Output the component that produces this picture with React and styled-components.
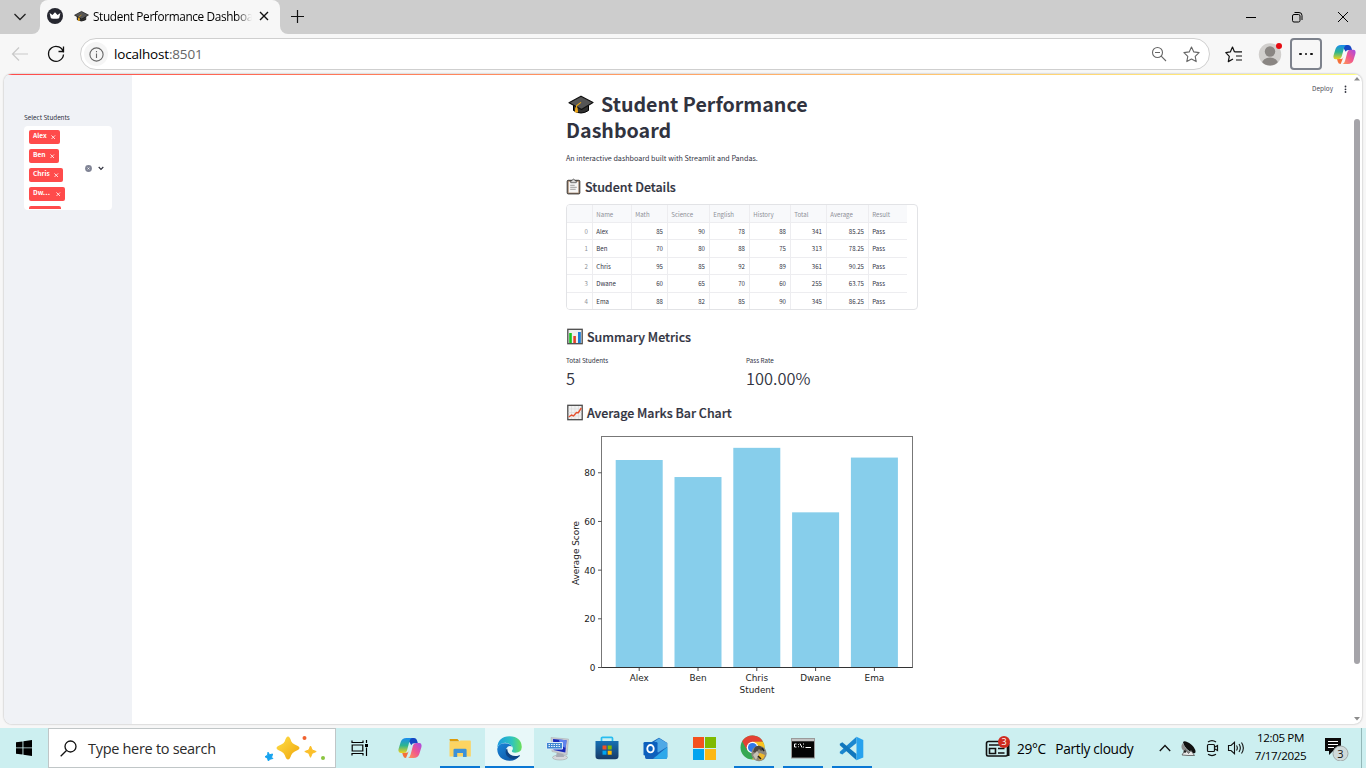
import React from "react";
import styled, { createGlobalStyle } from "styled-components";

const Global = createGlobalStyle`
  * { box-sizing: border-box; }
  html, body { margin: 0; padding: 0; overflow: hidden; }
  body { font-family: "Open Sans", "Noto Sans", sans-serif; background: #f7f7f7; color: #000; }
  svg { display: block; flex: none; }
`;

const source = `"Noto Sans CJK SC", "Noto Sans", sans-serif`;

const Screen = styled.div`
  width: 1366px; height: 768px; display: flex; flex-direction: column; overflow: hidden;
`;

/* ---------- browser chrome ---------- */
const TabStrip = styled.div`
  height: 34px; background: #cdcdcd; display: flex; align-items: center; flex: none;
`;
const TabMenu = styled.div`
  width: 40px; height: 34px; display: flex; align-items: center; justify-content: center;
  background: #cdcdcd; border-bottom-right-radius: 8px;
`;
const TabBack = styled.div`
  display: flex; height: 34px; background: #f7f7f7;
`;
const Tab = styled.div`
  width: 240px; height: 34px; display: flex; align-items: center;
  background: linear-gradient(#cdcdcd, #cdcdcd) 0 0 / 100% 10px no-repeat, #f7f7f7;
`;
const TabBody = styled.div`
  width: 240px; height: 34px; padding: 0 9px 2px 7px; display: flex; align-items: center;
  background: #f7f7f7; border-radius: 8px 8px 0 0;
`;
const TabTitle = styled.div`
  width: 159px; margin: 0 6px 0 4px; overflow: hidden; white-space: nowrap; font-size: 11.8px; flex: none;
  letter-spacing: -0.36px; line-height: 18px;
  mask-image: linear-gradient(90deg, #000 90%, transparent);
`;
const NewTab = styled.div`
  width: 40px; height: 34px; display: flex; align-items: center; padding-left: 10px; padding-bottom: 2px;
  background: #cdcdcd; border-bottom-left-radius: 8px;
`;
const WindowButtons = styled.div`
  margin-left: auto; display: flex; height: 34px;
`;
const WindowButton = styled.div`
  width: 46px; display: flex; align-items: center; justify-content: center;
`;
const Toolbar = styled.div`
  height: 40px; background: #f7f7f7; display: flex; align-items: center; flex: none;
`;
const NavButton = styled.div`
  width: ${(p) => p.$w}px; height: 32px; display: flex; align-items: center; justify-content: center;
`;
const AddressBar = styled.div`
  width: 1130px; height: 32px; border: 1px solid #cfcfcf; border-radius: 16px; background: #fff;
  display: flex; align-items: center; padding: 0 9px 0 3px;
`;
const InfoCircle = styled.div`
  width: 24px; height: 24px; border-radius: 50%; background: #f5f5f5;
  display: flex; align-items: center; justify-content: center;
`;
const Url = styled.div`
  font-size: 13.5px; margin-left: 6px; letter-spacing: -0.18px; flex: 1;
  span { color: #666; }
`;
const AddressIcons = styled.div`display: flex; gap: 16px;`;
const MoreButton = styled.div`
  width: 32px; height: 32px; border: 2px solid #7d828c; border-radius: 4px; margin-left: 3px;
  display: flex; align-items: center; justify-content: center; gap: 3px;
  i { width: 2.5px; height: 2.5px; border-radius: 50%; background: #111; }
`;
const Frame = styled.div`
  height: 650px; margin: 0 4px; border-radius: 8px; background: #fff; overflow: hidden; flex: none;
  box-shadow: 0 0 2px rgba(0,0,0,.35); display: flex; position: relative;
`;
const Decoration = styled.div`
  position: absolute; top: 0; left: 4px; right: 4px; height: 1px;
  background: linear-gradient(90deg, #ff4b4b, #fffd80);
`;

/* ---------- sidebar ---------- */
const Sidebar = styled.aside`
  width: 128px; background: #f0f2f6; padding: 38px 20px 0; font-family: ${source}; flex: none;
`;
const SideLabel = styled.div`
  font-size: 6.3px; line-height: 12px; color: #31333f; margin-bottom: 2px;
`;
const MultiSelect = styled.div`
  width: 88px; height: 84px; border-radius: 4px; background: #fff; display: flex; align-items: center;
  padding: 4px 8px 1px 5px;
`;
const Tags = styled.div`
  flex: 1; height: 79px; overflow: hidden; display: flex; flex-direction: column; gap: 5px; align-items: flex-start;
`;
const Tag = styled.div`
  width: ${(p) => p.$w}px; height: 14px; flex: none; border-radius: 2px; background: #ff4b4b; color: #fff;
  font-size: 6.6px; font-weight: 700; line-height: 11px; display: flex; justify-content: space-between;
  padding: 0 4.5px 0 4px; white-space: nowrap;
  svg { margin-top: 4.5px; }
`;
const SelectIcons = styled.div`display: flex; align-items: center; gap: 6px; padding-bottom: 2px;`;

/* ---------- main area ---------- */
const Main = styled.main`
  flex: 1; display: flex; justify-content: space-between; font-family: ${source}; color: #31333f;
`;
const Column = styled.div`
  width: 352px; margin-left: 434px; padding-top: 17px; display: flex; flex-direction: column;
`;
const Title = styled.h1`
  margin: 0; font-size: 19.65px; font-weight: 700; line-height: 26.4px; height: 53px; white-space: nowrap;
  svg { display: inline-block; vertical-align: -3px; margin: 0 7px 0 2px; }
`;
const Intro = styled.p`
  margin: 8px 0 0; font-size: 7.18px; line-height: 12px; white-space: nowrap;
`;
const Heading = styled.h2`
  margin: ${(p) => p.$top}px 0 0; font-size: 12.45px; font-weight: 500; line-height: 17px; height: 17px;
  display: flex; align-items: center; gap: 4px; white-space: nowrap;
  -webkit-text-stroke: 0.2px #31333f;
  span { padding-top: 2px; }
`;
const Table = styled.div`
  margin-top: 9px; width: 352px; height: 106px; border: 1px solid #e2e3e6; border-radius: 4px; overflow: hidden;
  font-size: 6.1px;
`;
const Row = styled.div`
  width: 340px; height: 17.5px; display: grid; align-items: stretch;
  grid-template-columns: 26px 39px 36px 42px 40px 41px 36px 42px 38px;
  background: ${(p) => (p.$head ? "#f8f9fb" : "#fff")};
  border-bottom: ${(p) => (p.$last ? 0 : 1)}px solid #ededf0;
  line-height: ${(p) => (p.$head ? 19.6 : 17.4)}px;
`;
const Cell = styled.div`
  padding: 0 4px 0 3.3px; border-right: ${(p) => (p.$end ? 0 : 1)}px solid #ededf0; height: 17px;
  text-align: ${(p) => (p.$right ? "right" : "left")};
  color: ${(p) => (p.$muted ? "#8d8f97" : "#31333f")};
`;
const Metrics = styled.div`display: flex; margin-top: 10px;`;
const Metric = styled.div`width: 180px; flex: none;`;
const MetricLabel = styled.div`font-size: 6.3px; line-height: 12px; height: 12px;`;
const MetricValue = styled.div`font-size: 16.4px; line-height: 23px; height: 26px; font-weight: 350;`;
const ChartBox = styled.div`margin-top: 9px;`;
const RightRail = styled.div`
  display: flex; align-items: flex-start; padding-top: 2px;
`;
const Deploy = styled.div`
  font-size: 6.4px; line-height: 12px; margin: 7px 11px 0 0; color: #4b4d57;
`;
const Scroll = styled.div`
  width: 10px; height: 648px; display: flex; flex-direction: column; align-items: center; margin-left: 5px;
`;
const Thumb = styled.div`
  width: 6px; height: 545px; border-radius: 3px; background: #a5a4a9; margin: 38px 0 auto;
`;

/* ---------- taskbar ---------- */
const Taskbar = styled.div`
  height: 40px; margin-top: 4px; background: #cceff0; display: flex; flex: none;
`;
const StartButton = styled.div`
  width: 48px; display: flex; align-items: center; justify-content: center;
`;
const Search = styled.div`
  width: 288px; height: 40px; background: #fff; border: 1px solid #c0c6c7; display: flex; align-items: center;
  padding: 0 9px 0 11px; font-size: 14.5px; color: #2b2b2b; white-space: nowrap;
  span { margin-left: 11px; flex: 1; letter-spacing: -0.3px; }
`;
const Slot = styled.div`
  width: ${(p) => p.$w || 49}px; height: 40px; display: flex; align-items: center; justify-content: center;
  background: ${(p) => (p.$active ? "#e8f8f9" : "transparent")};
  position: relative; padding-right: ${(p) => (p.$active ? 0 : 1.5)}px;
`;
const Underline = styled.div`
  position: absolute; bottom: 0; left: ${(p) => (p.$wide ? 0 : 4)}px; right: ${(p) => (p.$wide ? 0 : 5)}px;
  height: 2px; background: #0a78d4;
`;
const Tray = styled.div`
  margin-left: auto; display: flex; align-items: center; white-space: nowrap;
`;
const Weather = styled.div`
  display: flex; width: 142px; font-size: 13.7px; letter-spacing: -0.32px; gap: 9.5px; margin-left: 6px;
`;
const TrayIcons = styled.div`
  display: flex; align-items: center; width: 94px; gap: 8px;
  svg:first-child { margin-right: 1px; }
`;
const Clock = styled.div`
  width: 57px; font-size: 11.6px; letter-spacing: -0.38px; line-height: 18px; margin: -3px 0 0 -1px;
  display: flex; flex-direction: column; align-items: center;
`;
const Notices = styled.div`
  width: 53px; padding-left: 15px; height: 40px; display: flex; align-items: center; border-right: 1px solid #93b7b8; margin-right: 4px;
`;

/* ---------- drawings ---------- */
const Cap = ({ w = 26, h = 20 }) => (
  <svg width={w} height={h} viewBox="0 0 26 20">
    <path d="M5.5 9.5V15.5Q13 20.5 20.5 15.5V9.5Z" fill="#303030" stroke="#000" />
    <path d="M13 1.2 25 7.5 13.5 14.5 1 7.8Z" fill="#555" stroke="#111" strokeWidth="1.2" strokeLinejoin="round" />
    <path d="M13 7.4 8.5 10.8V16" fill="none" stroke="#e8a512" strokeWidth="1.1" />
    <path d="M7.3 12.5h2.2l.6 5H6.8Z" fill="#f0a818" />
  </svg>
);
const Clipboard = () => (
  <svg width="15" height="17" viewBox="0 0 15 17">
    <rect x="1.2" y="2.3" width="12.6" height="13.6" rx="1" fill="#a98b72" stroke="#333" />
    <rect x="2.7" y="3.8" width="9.6" height="10.8" fill="#f6f6f6" />
    <path d="M4.7 4.7v-2h1.2Q7.5-.5 9.1 2.7h1.2v2Z" fill="#d4d4d4" stroke="#444" strokeWidth=".7" />
    <path d="M4.2 7.3h4.500M4.200 9.300h6.600M4.200 11.300h5.500" stroke="#888" strokeWidth=".8" />
  </svg>
);
const BarsEmoji = () => (
  <svg width="17" height="17" viewBox="0 0 17 17">
    <rect x="1.8" y="1.3" width="14.4" height="14.4" fill="#efefef" stroke="#4b4b4b" strokeWidth="1.3" />
    <rect x="3.2" y="5" width="2.6" height="10" fill="#18c51f" />
    <rect x="7.3" y="8" width="2.6" height="7" fill="#e3412b" />
    <rect x="12" y="4" width="2.8" height="11" fill="#1a7bd6" />
  </svg>
);
const LineEmoji = () => (
  <svg width="17" height="17" viewBox="0 0 17 17">
    <rect x="1.8" y="1.3" width="14.4" height="14.4" fill="#f2f2f2" stroke="#4b4b4b" strokeWidth="1.3" />
    <path d="M5.500 2v13M9 2v13M12.500 2v13M2.500 5h13M2.500 8.500h13M2.500 12h13" stroke="#d8d8d8" strokeWidth=".6" />
    <path d="M2.800 13 5.500 11l2 1L10.500 8.500l1.800.2L15.300 4" fill="none" stroke="#e5512f" strokeWidth="1.4" />
  </svg>
);
const Favicon = () => (
  <svg width="16" height="16" viewBox="0 0 16 16">
    <circle cx="8" cy="8" r="8" fill="#262730" />
    <path d="m2.6 5 2.9 2L8 4.2 10.5 7l2.9-2-1.3 5.2q-4.1 1.2-8.2 0Z" fill="#fff" />
  </svg>
);
const Copilot = ({ s = 24 }) => (
  <svg width={s} height={s} viewBox="0 0 24 24">
    <defs>
      <linearGradient id="cpA" x1="0" y1="0" x2="0" y2="1">
        <stop offset="0" stopColor="#1a8cf0" /><stop offset=".5" stopColor="#2cb58f" /><stop offset="1" stopColor="#f2d21b" />
      </linearGradient>
      <linearGradient id="cpB" x1="1" y1="0" x2="0" y2="1">
        <stop offset="0" stopColor="#a64be8" /><stop offset=".5" stopColor="#f0568e" /><stop offset="1" stopColor="#ff9a52" />
      </linearGradient>
    </defs>
    <path d="M9 2h7q2.400 0 3.200 3l.7 2.200h-4q-2 0-2.600 2z" fill="#1548c4" />
    <path d="M8 22q-2.400 0-3-2.500L4.200 16.800H8.500q1.800 0 2.500-2.400z" fill="#f4703a" />
    <path d="M8.500 2H14q-1.800.5-2.600 3.400l-2.400 9Q8.300 17 5.800 17H2.800Q-.4 17 .7 12.500L2.700 6Q4 2 8.500 2Z" fill="url(#cpA)" />
    <path d="M15.500 22H10q1.800-.5 2.600-3.400l2.400-9Q15.700 7 18.200 7h3q3.200 0 2.100 4.500L21.300 18Q20 22 15.500 22Z" fill="url(#cpB)" />
  </svg>
);
const Explorer = () => (
  <svg width="22" height="20" viewBox="0 0 22 20">
    <path d="M.5 1h8l2 2.500H1z" fill="#dd9b0a" />
    <path d="M.5 3.500H10l1.500-1H21q.8 0 .8.900V18.500H.5Z" fill="#fcd462" />
    <path d="M4.500 19V12q0-1.300 1.300-1.300H16.300q1.300 0 1.300 1.300v7H14V15H8.200v4Z" fill="#3c92d8" />
  </svg>
);
const Edge = () => (
  <svg width="25" height="25" viewBox="0 0 24 24">
    <defs>
      <linearGradient id="egA" x1="0" x2="1"><stop offset="0" stopColor="#1b9be0" /><stop offset=".6" stopColor="#2fc4be" /><stop offset="1" stopColor="#6be058" /></linearGradient>
      <linearGradient id="egB" x1="0" y1="0" x2="1" y2="1"><stop offset="0" stopColor="#1a86d8" /><stop offset="1" stopColor="#0b4fa0" /></linearGradient>
    </defs>
    <path d="M.3 11Q1 .5 12 .3 23.400.8 23.800 10.500 23.500 16 17.500 16q-4-.2-3-2 1.500-2 0-4.200Q10 4.500 4 7.500.8 9 .3 11Z" fill="url(#egA)" />
    <path d="M.2 12.500Q1 7 7.500 7q5.500.2 7 3.200Q11 8.500 9 12q-1.500 4 2 7 5 3.500 10.500.3Q18 24 12 23.800.8 23 .2 12.500Z" fill="url(#egB)" />
    <path d="M8.600 13q-1.500 6 4.400 8.600 5 1.500 9-2.500.3-.8-.6-.7-4.400 2-8.400-.4Q9.500 16 10 12.300Z" fill="#0d4486" />
  </svg>
);
const Monitor = () => (
  <svg width="25" height="25" viewBox="0 0 25 25">
    <ellipse cx="15" cy="21.500" rx="7.500" ry="2.500" fill="#d6d8dc" stroke="#999" strokeWidth=".5" />
    <path d="M12 15h6l1 6h-8z" fill="#a8acb5" />
    <path d="M6 1.500 23.500 3 22 19 7 15.500Z" fill="#c9cbd3" stroke="#aaa" strokeWidth=".5" />
    <path d="M8 3 21.500 4.300 20.300 16.600 8.500 14Z" fill="#1728b8" />
    <path d="M14 3.600 21.500 4.300 20.700 12Q15 10 14 4Z" fill="#5f83ee" />
    <path d="M1.500 6.500h16v6.500h-16Z" fill="#3f86d2" stroke="#dcebf8" />
    <path d="M3.500 8.500h12M3.500 10.500h12" stroke="#fff" strokeWidth=".9" strokeDasharray="1.500 1" />
  </svg>
);
const StoreIcon = () => (
  <svg width="24" height="24" viewBox="0 0 24 24">
    <defs><linearGradient id="st" x1="0" y1="0" x2="0" y2="1"><stop offset="0" stopColor="#1670b4" /><stop offset="1" stopColor="#173a66" /></linearGradient></defs>
    <path d="M6.500 6V2.300Q6.500 1.300 7.500 1.300h9q1 0 1 1V6" fill="none" stroke="#29bdf0" strokeWidth="1.700" />
    <path d="M.5 5h23v15q0 3.300-3.300 3.300H3.800Q.5 23.300.5 20Z" fill="url(#st)" />
    <path d="M7.500 9.500h4v4h-4z" fill="#f25022" /><path d="M12.700 9.500h4v4h-4z" fill="#7fba00" />
    <path d="M7.500 14.700h4v4h-4z" fill="#00a4ef" /><path d="M12.700 14.700h4v4h-4z" fill="#ffb900" />
  </svg>
);
const Outlook = () => (
  <svg width="25" height="23" viewBox="0 0 25 23">
    <path d="M7 6 16 .8 24.300 6v14q0 2-2 2H3.500q-1.500 0-1.500-2V10Z" fill="#1560b8" />
    <path d="M9 6.500 16 1.200 24 6V10L15 15.500 9 11Z" fill="#4fa9e6" />
    <path d="M10 21.700 24.300 10v10q0 2-2 2Z" fill="#2da8ea" />
    <rect x=".5" y="5" width="14" height="13.500" rx="1.300" fill="#0c60bd" />
    <ellipse cx="7.500" cy="11.700" rx="3.200" ry="3.700" fill="none" stroke="#fff" strokeWidth="1.900" />
  </svg>
);
const MsLogo = () => (
  <svg width="23" height="23" viewBox="0 0 23 23">
    <path d="M0 0h11v11H0z" fill="#f4511e" /><path d="M12 0h11v11H12z" fill="#7fba00" />
    <path d="M0 12h11v11H0z" fill="#00a4ef" /><path d="M12 12h11v11H12z" fill="#fcb813" />
  </svg>
);
const Chrome = () => (
  <svg width="27" height="27" viewBox="0 0 27 27">
    <circle cx="12.500" cy="12.500" r="12" fill="#35a853" />
    <path d="M2.200 6.300A12 12 0 0 1 23 6.700L12.500 7 7 15Z" fill="#e34133" />
    <path d="M23 6.700A12 12 0 0 1 12 24.500L18 15 12.500 6.700Z" fill="#fcc31e" />
    <circle cx="12.500" cy="12.500" r="5.800" fill="#fff" /><circle cx="12.500" cy="12.500" r="4.500" fill="#2f78e8" />
    <circle cx="19" cy="18.500" r="7.700" fill="#8b877d" />
    <path d="M14 14q2-4 6-3l4 3-3 2-2-2-3 4-3-1z" fill="#4c4740" />
    <path d="m17 20 3-2 5 2q-1 4-5 5.500z" fill="#efb92b" /><path d="m13 20 4-4 2 3-3 6z" fill="#c5c0b6" />
    <path d="m18 21 3 3m1-11 2 3" stroke="#222" strokeWidth="1.500" />
  </svg>
);
const Cmd = () => (
  <svg width="24" height="21" viewBox="0 0 24 21">
    <rect x=".5" y=".5" width="23" height="19.500" fill="#050505" stroke="#9a9a9a" />
    <path d="M1 1h22v2.300H1z" fill="#c4c4c4" />
    <path d="M5.500 6H3.500v3h2M7.500 6v.8m0 1.600v.8M9 5.500l2 4M12.500 5.500v1m0 2v1M14.500 9.500H20" stroke="#fff" fill="none" strokeWidth="1" />
  </svg>
);
const Code = () => (
  <svg width="25" height="25" viewBox="0 0 25 25">
    <path d="M17.500 7 3.300 18.500.8 17.200V15.800L17.500.8Z" fill="#1b86cf" />
    <path d="M17.500 18 3.300 6.300.8 7.700V9.200L17.500 24.300Z" fill="#1177bd" />
    <path d="M17.500.8 24.300 4v17.500l-6.800 2.700Z" fill="#27a2ee" />
  </svg>
);
const Sparkles = () => (
  <svg width="62" height="26" viewBox="0 0 62 26">
    <defs><linearGradient id="sp" x1="0" y1="0" x2="1" y2="1"><stop offset="0" stopColor="#ffe04a" /><stop offset="1" stopColor="#efa50a" /></linearGradient></defs>
    <path d="M24 1.500q1.800 0 3.300 5 1 2 3.500 3 4.700 1.900 4.700 3.500t-4.700 3.400q-2.500 1-3.500 3.500-1.500 4.600-3.300 4.600t-3.300-4.600q-1-2.500-3.500-3.500-4.700-1.800-4.700-3.400t4.700-3.500q2.500-1 3.500-3 1.500-5 3.300-5Z" fill="url(#sp)" />
    <path d="m46.500 11 1.700 4 4 1.500-4 1.800-1.700 4-1.700-4-4-1.800 4-1.500Z" fill="#fbbf2a" stroke="#fbbf2a" strokeLinejoin="round" />
    <path d="m4 17.200 1.600 2.500 3-.7-1 3.200 1.300 1.300-3 .7-1.500 1.800-1-2.800-2.400-1.500 2.600-1.500Z" fill="#16a3ef" stroke="#16a3ef" strokeLinejoin="round" />
    <circle cx="40.500" cy="3" r="2" fill="#f0622f" /><circle cx="59" cy="23" r="2" fill="#8bc540" />
  </svg>
);
const TaskView = () => (
  <svg width="18" height="18" viewBox="0 0 18 18" fill="none" stroke="#000" strokeWidth="1.200">
    <path d="M1 1.500v2h11v-2M1 16.500v-2h11v2M1.200 6h10.600v6H1.200ZM15.500 1v3M15.500 8.500V17" />
    <path d="M14 5h3v3h-3z" fill="#000" stroke="none" />
  </svg>
);
const News = () => (
  <svg width="26" height="24" viewBox="0 0 26 24">
    <path d="M3.500 5.500h19v13q0 1.500-1.500 1.500H3q-1.500 0-1.500-1.500v-11q0-2 2-2ZM4 9h14M4.500 12.500h6v5h-6ZM13 12.500h6.500M13 17h6.500M23.700 8v12" fill="none" stroke="#111" strokeWidth="1.600" />
    <circle cx="19" cy="6" r="6" fill="#cf2b20" />
    <text x="19" y="9.300" fontSize="9" fill="#fff" textAnchor="middle">3</text>
  </svg>
);
const Dish = () => (
  <svg width="17" height="17" viewBox="0 0 17 17">
    <path d="M3 2.500Q3.500.5 6 1.500 13 4 15.300 10q1 4-2.300 3Q5 9.500 3 2.500Z" fill="#111" />
    <path d="M3 3q-2.500 2.500-1 6 2 3.500 6 4.500l4-.5Q5.500 9.500 3 3Z" fill="#8f8f8f" />
    <path d="M2 15 5.500 9.500l3 4 2.500-3 3.500 5H8Z" fill="#e8e8e8" stroke="#555" strokeWidth=".8" />
    <circle cx="5" cy="11.500" r="1.300" fill="#222" />
  </svg>
);
const Camera = () => (
  <svg width="14" height="18" viewBox="0 0 14 18" fill="none" stroke="#111" strokeWidth="1.200">
    <rect x="2.500" y="5.500" width="7" height="7" rx="1" /><path d="M10 8 12.500 6.500v5L10 10M3 3Q7 .2 11 3M3 15.300q4 2.500 8 0" />
  </svg>
);
const Speaker = () => (
  <svg width="18" height="16" viewBox="0 0 18 16" fill="none" stroke="#111" strokeWidth="1.100">
    <path d="M1.500 5.500H4L7.500 2.300v11.400L4 10.500H1.500ZM9.500 5.500q1.700 2.500 0 5M12 4q2.700 4 0 8M14.500 2.500q3.700 5.500 0 11" />
  </svg>
);
const NoticeIcon = () => (
  <svg width="26" height="26" viewBox="0 0 26 26">
    <path d="M1 3h16v13H9l-4 4v-4H1Z" fill="#0a0a0a" /><path d="M4 6.500h10M4 9.500h10M4 12.500h6" stroke="#fff" />
    <circle cx="16.500" cy="18.500" r="7.500" fill="#cfdada" stroke="#a1a9a9" />
    <text x="16.500" y="22.500" fontSize="11" fill="#111" textAnchor="middle">3</text>
  </svg>
);
const Avatar = () => (
  <svg width="26" height="24" viewBox="0 0 26 24">
    <clipPath id="av"><circle cx="12" cy="12.500" r="11" /></clipPath>
    <circle cx="12" cy="12.500" r="11.200" fill="#d1cfcd" />
    <circle cx="12" cy="9.500" r="5.200" fill="#8a8683" />
    <ellipse cx="12" cy="21.500" rx="8" ry="6" fill="#8a8683" clipPath="url(#av)" />
    <circle cx="21" cy="4" r="3" fill="#e60b12" />
  </svg>
);

/* ---------- data ---------- */
const students = [
  ["Alex", 85, 90, 78, 88, 341, "85.25"],
  ["Ben", 70, 80, 88, 75, 313, "78.25"],
  ["Chris", 95, 85, 92, 89, 361, "90.25"],
  ["Dwane", 60, 65, 70, 60, 255, "63.75"],
  ["Ema", 88, 82, 85, 90, 345, "86.25"],
];
const columns = ["", "Name", "Math", "Science", "English", "History", "Total", "Average", "Result"];
const tags = [["Alex", 31], ["Ben", 30], ["Chris", 34], ["Dw…", 36], ["Ema", 32]];

const BASE = 237.5;
const UNIT = 2.434;

const Chart = () => (
  <svg width="352" height="270" viewBox="0 0 352 270" fontFamily='"DejaVu Sans", sans-serif' fontSize="8.900" fill="#1c1c1c">
    {students.map((s, i) => (
      <rect key={s[0]} x={49.7 + i * 58.8} y={BASE - s[6] * UNIT} width="47" height={s[6] * UNIT} fill="#87ceeb" />
    ))}
    <rect x="35.500" y="6.500" width="311" height="231" fill="none" stroke="#777" />
    <path d="M35.500 237.500h311" stroke="#333" />
    {[0, 20, 40, 60, 80].map((t) => (
      <g key={t}>
        <path d={`M32 ${BASE - t * UNIT}h3.500`} stroke="#444" strokeWidth=".9" />
        <text x="29.500" y={BASE - t * UNIT + 3.6} textAnchor="end">{t}</text>
      </g>
    ))}
    {students.map((s, i) => (
      <g key={s[0]}>
        <path d={`M${73.2 + i * 58.8} 238v3`} stroke="#333" strokeWidth=".9" />
        <text x={73.2 + i * 58.8} y="251" textAnchor="middle">{s[0]}</text>
      </g>
    ))}
    <text x="191" y="263" textAnchor="middle">Student</text>
    <text transform="translate(13 123) rotate(-90)" textAnchor="middle">Average Score</text>
  </svg>
);

export default function App() {
  return (
    <Screen>
      <Global />
      <TabStrip>
        <TabBack>
          <TabMenu>
            <svg width="14" height="10" viewBox="0 0 14 10"><path d="m1.500 2 5.500 5.500L12.500 2" fill="none" stroke="#222" strokeWidth="1.300" /></svg>
          </TabMenu>
          <Tab>
            <TabBody>
              <Favicon />
              <svg width="11" height="1" />
              <Cap w={15} h={13} />
              <TabTitle>Student Performance Dashboard</TabTitle>
              <svg width="12" height="12" viewBox="0 0 12 12"><path d="m2 2 8 8M10 2l-8 8" stroke="#111" strokeWidth="1.400" /></svg>
            </TabBody>
          </Tab>
          <NewTab>
            <svg width="15" height="15" viewBox="0 0 15 15"><path d="M7.500 1v13M1 7.500h13" stroke="#111" strokeWidth="1.200" /></svg>
          </NewTab>
        </TabBack>
        <WindowButtons>
          <WindowButton><svg width="10" height="10"><path d="M0 5.500h10" stroke="#000" /></svg></WindowButton>
          <WindowButton><svg width="12" height="12" viewBox="0 0 12 12" fill="none" stroke="#000"><rect x="1.500" y="3.500" width="7.500" height="7.500" rx="1.500" /><path d="M3.500 1.500H8q3 0 3 3V9" /></svg></WindowButton>
          <WindowButton><svg width="12" height="12" viewBox="0 0 12 12"><path d="m1 1 10 10M11 1 1 11" stroke="#000" /></svg></WindowButton>
        </WindowButtons>
      </TabStrip>

      <Toolbar>
        <NavButton $w={39}>
          <svg width="17" height="16" viewBox="0 0 17 16" fill="none" stroke="#c9c9c9" strokeWidth="1.200"><path d="M17 8H1.500M8 1.500 1.500 8 8 14.500" /></svg>
        </NavButton>
        <NavButton $w={33}>
          <svg width="18" height="18" viewBox="0 0 18 18" fill="none" stroke="#111" strokeWidth="1.300"><path d="M16.400 7.500A7.500 7.500 0 1 0 16.500 9.500M16.500 1.500v5h-5" /></svg>
        </NavButton>
        <svg width="8" height="1" />
        <AddressBar>
          <InfoCircle>
            <svg width="15" height="15" viewBox="0 0 15 15" fill="none" stroke="#666" strokeWidth="1.100"><circle cx="7.500" cy="7.500" r="6.600" /><path d="M7.500 6.500V11M7.500 4v1.200" /></svg>
          </InfoCircle>
          <Url>localhost<span>:8501</span></Url>
          <AddressIcons>
            <svg width="16" height="16" viewBox="0 0 16 16" fill="none" stroke="#666" strokeWidth="1.100"><circle cx="6.500" cy="6.500" r="5" /><path d="M10.200 10.200 15 15M4 6.500h5" /></svg>
            <svg width="17" height="17" viewBox="0 0 17 17" fill="none" stroke="#666" strokeWidth="1.100" strokeLinejoin="round"><path d="m8.500 1 2.300 4.900 5.300.7-3.900 3.700 1 5.300-4.700-2.600-4.700 2.600 1-5.300L.9 6.600l5.300-.7Z" /></svg>
          </AddressIcons>
        </AddressBar>
        <NavButton $w={48}>
          <svg width="18" height="17" viewBox="0 0 18 17" fill="none" stroke="#111" strokeWidth="1.200" strokeLinejoin="round"><path d="M9.500 5.900 7.500 1 5.300 5.900.8 6.600l3.500 3.700-1 5.300L8 13M9.500 5.900H17M11 10h6M11 14h6" /></svg>
        </NavButton>
        <Avatar />
        <svg width="3" height="1" />
        <MoreButton><i /><i /><i /></MoreButton>
        <NavButton $w={44}><Copilot s={23} /></NavButton>
      </Toolbar>

      <Frame>
        <Sidebar>
          <SideLabel>Select Students</SideLabel>
          <MultiSelect>
            <Tags>
              {tags.map(([t, w]) => (
                <Tag key={t} $w={w}>{t}<svg width="4.500" height="4.500" viewBox="0 0 5 5"><path d="m.5.5 4 4m0-4-4 4" stroke="#fff" strokeWidth=".9" /></svg></Tag>
              ))}
            </Tags>
            <SelectIcons>
              <svg width="7" height="7" viewBox="0 0 7 7"><circle cx="3.500" cy="3.500" r="3.400" fill="#808495" /><path d="m2.600 2.600 1.800 1.800m0-1.800L2.600 4.400" stroke="#fff" strokeWidth=".8" /></svg>
              <svg width="6" height="5" viewBox="0 0 6 5"><path d="m.7 1 2.300 2.300L5.300 1" fill="none" stroke="#31333f" strokeWidth="1.200" /></svg>
            </SelectIcons>
          </MultiSelect>
        </Sidebar>
        <Main>
          <Column>
            <Title><Cap />Student Performance<br />Dashboard</Title>
            <Intro>An interactive dashboard built with Streamlit and Pandas.</Intro>
            <Heading $top={14}><Clipboard /><span>Student Details</span></Heading>
            <Table>
              <Row $head>
                {columns.map((c, i) => <Cell key={i} $muted $end={i === 8}>{c}</Cell>)}
              </Row>
              {students.map((s, r) => (
                <Row key={r} $last={r === 4}>
                  <Cell $right $muted>{r}</Cell>
                  {s.map((v, i) => <Cell key={i} $right={i > 0}>{v}</Cell>)}
                  <Cell $end>Pass</Cell>
                </Row>
              ))}
            </Table>
            <Heading $top={18}><BarsEmoji /><span>Summary Metrics</span></Heading>
            <Metrics>
              <Metric><MetricLabel>Total Students</MetricLabel><MetricValue>5</MetricValue></Metric>
              <Metric><MetricLabel>Pass Rate</MetricLabel><MetricValue>100.00%</MetricValue></Metric>
            </Metrics>
            <Heading $top={11}><LineEmoji /><span>Average Marks Bar Chart</span></Heading>
            <ChartBox><Chart /></ChartBox>
          </Column>
          <RightRail>
            <Deploy>Deploy</Deploy>
            <svg width="3" height="26" viewBox="0 0 3 26" fill="#31333f"><circle cx="1.500" cy="10.500" r=".9" /><circle cx="1.500" cy="13.300" r=".9" /><circle cx="1.500" cy="16" r=".9" /></svg>
            <Scroll>
              <svg width="6" height="5"><path d="M0 4.500 3 1l3 3.500Z" fill="#8b8b8b" /></svg>
              <Thumb />
              <svg width="6" height="7"><path d="M0 0 3 3.500 6 0Z" fill="#8b8b8b" /></svg>
            </Scroll>
          </RightRail>
        </Main>
        <Decoration />
      </Frame>

      <Taskbar>
        <StartButton>
          <svg width="16" height="16" viewBox="0 0 16 16"><path d="M0 2.300 6.500 1.400v6H0ZM7.400 1.200 16 0v7.400H7.400ZM0 8.300h6.500v6.300L0 13.700ZM7.400 8.300H16V16l-8.600-1.200Z" /></svg>
        </StartButton>
        <Search>
          <svg width="17" height="17" viewBox="0 0 17 17" fill="none" stroke="#111" strokeWidth="1.300"><circle cx="10.500" cy="6.500" r="5.500" /><path d="M6.500 10.500.7 16.300" /></svg>
          <span>Type here to search</span>
          <Sparkles />
        </Search>
        <Slot $w={49}><TaskView /></Slot>
        <Slot $w={51}><Copilot /></Slot>
        <Slot><Explorer /><Underline /></Slot>
        <Slot $active><Edge /><Underline $wide /></Slot>
        <Slot><Monitor /></Slot>
        <Slot><StoreIcon /></Slot>
        <Slot><Outlook /></Slot>
        <Slot><MsLogo /></Slot>
        <Slot><Chrome /><Underline /></Slot>
        <Slot><Cmd /><Underline /></Slot>
        <Slot><Code /><Underline /></Slot>
        <Tray>
          <News />
          <Weather><span>29°C</span><span>Partly cloudy</span></Weather>
          <TrayIcons>
            <svg width="12" height="8" viewBox="0 0 12 8"><path d="m.8 7 5.200-5.500L11.200 7" fill="none" stroke="#111" strokeWidth="1.300" /></svg>
            <Dish /><Camera /><Speaker />
          </TrayIcons>
          <Clock><span>12:05 PM</span><span>7/17/2025</span></Clock>
          <Notices><NoticeIcon /></Notices>
        </Tray>
      </Taskbar>
    </Screen>
  );
}
